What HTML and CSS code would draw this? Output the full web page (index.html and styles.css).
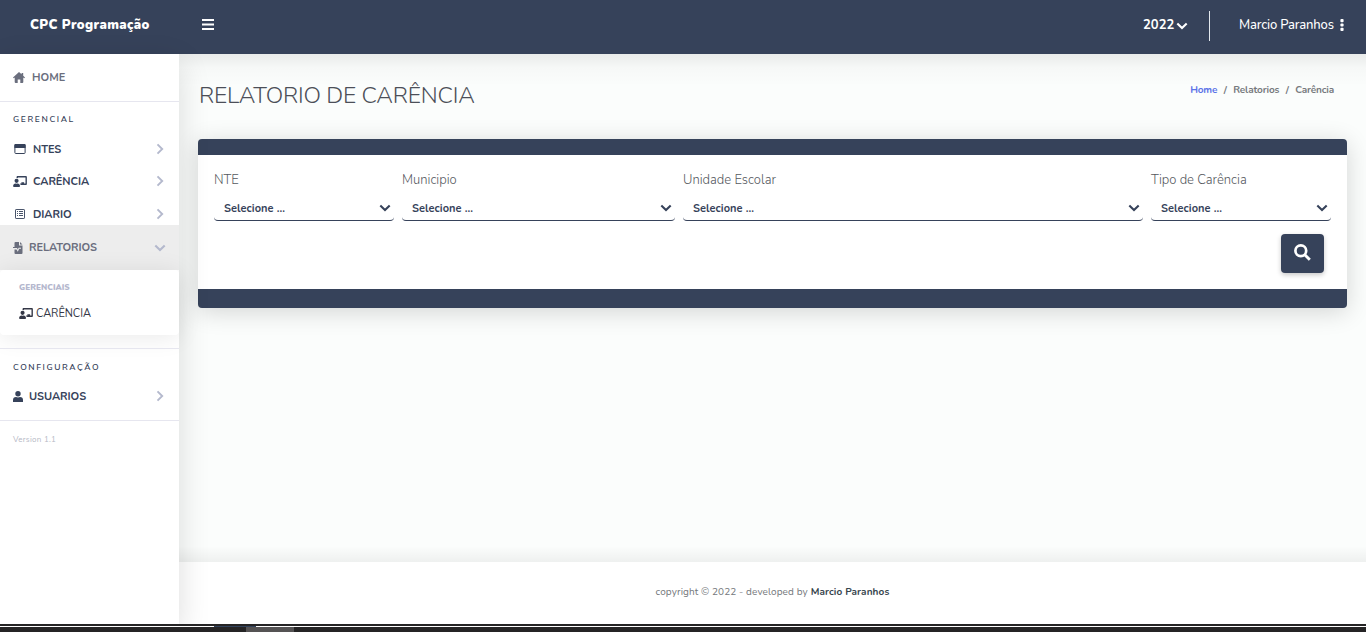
FILE: index.html
```html
<!DOCTYPE html>
<html lang="pt-BR">
<head>
<meta charset="utf-8">
<title>CPC Programação</title>
<link rel="stylesheet" href="styles.css">
</head>
<body>
<svg class="defs" aria-hidden="true">
  <symbol id="chevron" viewBox="0 0 8 12"><path d="M1.500 1.300 6.200 6l-4.700 4.700" fill="none" stroke="currentColor" stroke-width="1.900"/></symbol>
  <symbol id="down" viewBox="0 0 12 8"><path d="M1.300 1.500 6 6l4.700-4.500" fill="none" stroke="currentColor" stroke-width="2.100"/></symbol>
  <symbol id="teacher" viewBox="0 0 640 512"><path fill="currentColor" d="M208 352c-2 0-5 0-7 1a128 128 0 0 1-82 0c-2-1-5-1-7-1C50 352 0 402 0 464c0 26 22 48 48 48h224c26 0 48-22 48-48 0-62-50-112-112-112zm-48-32a96 96 0 1 0 0-192 96 96 0 0 0 0 192zM592 0H208c-26 0-48 22-48 49v47c23 0 45 7 64 18V64h352v288h-64v-64H384v64h-76c20 17 34 39 40 64h244c26 0 48-22 48-49V49c0-27-22-49-48-49z"/></symbol>
</svg>
<header class="topbar">
  <div class="brand">CPC Programação</div>
  <svg class="menu" viewBox="0 0 12 11"><path d="M0 1h12M0 5.500h12M0 10h12" stroke="#fff" stroke-width="1.800"/></svg>
  <div class="year">2022</div>
  <svg class="year-arrow"><use href="#down"/></svg>
  <div class="divider"></div>
  <div class="user">Marcio Paranhos</div>
  <svg class="dots" viewBox="0 0 4 12"><rect x=".4" width="3.200" height="3.200" rx="1" fill="#fff"/><rect x=".4" y="4.400" width="3.200" height="3.200" rx="1" fill="#fff"/><rect x=".4" y="8.800" width="3.200" height="3.200" rx="1" fill="#fff"/></svg>
</header>
<div class="shell">
  <nav class="sidebar">
    <a class="item home"><svg class="i-home" viewBox="0 0 12 11"><path d="M6 0 0 5.400l.7.800 1-.7V10q0 1 1 1h2V7.500h2.600V11h2q1 0 1-1V5.500l1 .7.700-.8-1.800-1.600V1H8.600v1.300z" fill="currentColor"/></svg><span>HOME</span></a>
    <div class="section">GERENCIAL</div>
    <a class="item ntes"><svg class="i-sq" viewBox="0 0 12 10"><rect x=".9" y=".5" width="10.200" height="9" rx=".8" fill="none" stroke="currentColor"/><path d="M1.400 0h9.200q1 0 1 1v3H.4V1q0-1 1-1z" fill="currentColor"/></svg><span>NTES</span><svg class="chev"><use href="#chevron"/></svg></a>
    <a class="item carencia"><svg class="i-teach"><use href="#teacher"/></svg><span>CARÊNCIA</span><svg class="chev"><use href="#chevron"/></svg></a>
    <a class="item diario"><svg class="i-sq" viewBox="0 0 12 10"><rect x="1.500" y=".5" width="9" height="9" rx=".6" fill="none" stroke="currentColor" stroke-width=".9"/><path d="M3 2.500h1M5 2.500h4M3 4.500h1M5 4.500h4M3 6.500h1M5 6.500h4" stroke="currentColor" stroke-width=".9"/></svg><span>DIARIO</span><svg class="chev"><use href="#chevron"/></svg></a>
    <a class="item reports"><svg class="i-file" viewBox="0 0 10 12"><path d="M1.500 1q0-1 1-1H6v3.500h3.500V11q0 1-1 1h-6q-1 0-1-1V7.500h2L4.800 9.700l1.400-2.900H8V5.800H5.600L4.800 7.500 4 6H0V5h1.500zM7 0l2.500 2.500H7z" fill="currentColor"/></svg><span>RELATORIOS</span><svg class="chev-down"><use href="#down"/></svg></a>
    <div class="submenu">
      <div class="subhead">GERENCIAIS</div>
      <a class="sublink"><svg class="i-teach"><use href="#teacher"/></svg><span>CARÊNCIA</span></a>
    </div>
    <div class="section config">CONFIGURAÇÃO</div>
    <a class="item users"><svg class="i-user" viewBox="0 0 10 11"><circle cx="5" cy="2.700" r="2.700" fill="currentColor"/><path d="M0 11V9q0-3 3-3 2 .9 4 0 3 0 3 3v2z" fill="currentColor"/></svg><span>USUARIOS</span><svg class="chev"><use href="#chevron"/></svg></a>
    <div class="version">Version 1.1</div>
  </nav>
  <div class="main">
    <main class="content">
      <div class="heading">
        <h1>RELATORIO DE CARÊNCIA</h1>
        <div class="crumbs"><a>Home</a><i>/</i><span>Relatorios</span><i>/</i><span>Carência</span></div>
      </div>
      <section class="card">
        <div class="fields">
          <div class="field"><label>NTE</label><div class="select"><span>Selecione ...</span><svg><use href="#down"/></svg></div></div>
          <div class="field"><label>Municipio</label><div class="select"><span>Selecione ...</span><svg><use href="#down"/></svg></div></div>
          <div class="field"><label>Unidade Escolar</label><div class="select"><span>Selecione ...</span><svg><use href="#down"/></svg></div></div>
          <div class="field"><label>Tipo de Carência</label><div class="select"><span>Selecione ...</span><svg><use href="#down"/></svg></div></div>
        </div>
        <button class="search" aria-label="Buscar"><svg viewBox="0 0 17 17"><circle cx="6.800" cy="6.800" r="5.400" fill="none" stroke="#fff" stroke-width="2.700"/><path d="m10.800 10.800 5 5" stroke="#fff" stroke-width="2.900"/></svg></button>
      </section>
    </main>
    <footer class="footer"><span>copyright © 2022 - developed by</span><b>Marcio Paranhos</b></footer>
  </div>
</div>
<div class="taskbar"><div class="edge"></div><div class="line"><i></i></div><div class="base"><i></i></div></div>
</body>
</html>
```
FILE: styles.css
```css
* { box-sizing: border-box; }
body { margin: 0; width: 1366px; height: 632px; overflow: hidden; display: flex; flex-direction: column; font-family: Nunito, Lato, sans-serif; color: #36425a; background: #fff; }
svg { display: block; flex: none; }
span, label, h1, b, .brand, .user, .year { white-space: nowrap; }
.defs { display: none; }

.topbar { height: 54px; flex: none; background: #36425a; color: #fff; display: flex; align-items: center; padding: 0 22px 5px 30px; font-size: 13px; }
.brand { width: 172px; font-weight: 900; letter-spacing: .37px; }
.menu { width: 12px; height: 11px; margin-right: auto; }
.year { font-weight: 700; width: 33px; letter-spacing: .05px; }
.year-arrow { width: 12px; height: 8px; margin-top: 2px; }
.divider { width: 1px; height: 30px; margin: 3px 29px 0 21px; background: #e3e8ee; }
.user { width: 101px; font-weight: 500; letter-spacing: -.18px; padding-top: 1px; }
.dots { width: 4px; height: 12px; margin-top: 1px; }

.shell { flex: 1; min-height: 0; display: flex; }
.sidebar { width: 179px; flex: none; background: #fff; box-shadow: 0 10px 30px rgba(0,0,0,.14); z-index: 1; font-size: 11px; }
.item { display: flex; align-items: center; height: 32px; padding: 0 15px 0 13px; font-weight: 700; letter-spacing: -.06px; }
.item .chev, .chev-down { margin-left: auto; color: #b4b9cd; }
.chev { width: 8px; height: 12px; }
.chev-down { width: 12px; height: 8px; margin-right: -2px; }
.home { height: 48px; color: #6a6e7d; border-bottom: 1px solid #e6e6ef; letter-spacing: 0; }
.i-home { width: 12px; height: 11px; margin-right: 7px; }
.section { height: 31px; padding: 11px 13px 0; font-size: 8.5px; line-height: 13px; font-weight: 600; letter-spacing: 1.62px; }
.i-sq { width: 12px; height: 10px; margin: 0 7px 0 1px; }
.i-teach { width: 14px; height: 11px; margin-right: 6px; }
.diario { height: 28px; padding-top: 6px; }
.reports { height: 45px; background: #ededed; color: #6a6e7d; letter-spacing: -.08px; }
.i-file { width: 10px; height: 12px; margin-right: 6px; }
.submenu { height: 65px; margin-bottom: 13px; padding: 10px 19px; background: #fff; border-radius: 4px; box-shadow: 0 2px 24px rgba(0,0,0,.09); }
.subhead { height: 15px; font-size: 8.2px; line-height: 15px; font-weight: 900; color: #b5b8ce; letter-spacing: .02px; }
.sublink { display: flex; align-items: center; height: 37px; color: #343746; font-size: 11px; letter-spacing: -.06px; }
.sublink .i-teach { margin-right: 3px; }
.config { height: 32px; border-top: 1px solid #e6e6ef; padding-top: 12px; letter-spacing: 1.6px; }
.users { height: 41px; padding-bottom: 8px; border-bottom: 1px solid #e6e6ef; }
.i-user { width: 10px; height: 11px; margin-right: 6px; }
.version { padding: 13px; font-size: 8px; line-height: 12px; color: #b5b8c5; letter-spacing: .25px; }

.main { flex: 1; min-width: 0; display: flex; flex-direction: column; }
.content { flex: 1; padding: 27px 19px 0; background: linear-gradient(rgba(0,0,0,.07), rgba(0,0,0,.02) 14px, transparent 32px), linear-gradient(to top, rgba(0,0,0,.05), transparent 16px), #fbfdfc; }
.heading { height: 58px; display: flex; justify-content: space-between; align-items: flex-start; padding: 0 13px 0 1px; }
h1 { margin: 0; font-size: 23px; line-height: 29px; font-weight: 300; letter-spacing: -.2px; color: #4c4f58; }
.crumbs { display: flex; padding-top: 2px; font-size: 10px; line-height: 14px; font-weight: 700; letter-spacing: -.15px; color: #76797d; }
.crumbs a { color: #5b73e8; }
.crumbs i { width: 16px; text-align: center; font-style: normal; }
.card { height: 169px; background: #fff; border-top: 16px solid #36425a; border-bottom: 19px solid #36425a; border-radius: 4px; box-shadow: 0 4px 25px rgba(0,0,0,.16); padding: 16px; display: flex; flex-direction: column; }
.fields { display: grid; grid-template-columns: 180px 273px 460px 180px; gap: 8px; }
label { display: block; height: 25px; font-size: 13px; line-height: 18px; font-weight: 300; color: #55585e; }
.select { height: 25px; display: flex; align-items: center; justify-content: space-between; padding: 0 3px 0 10px; border-bottom: 1px solid #36425a; border-radius: 4px; font-size: 11px; font-weight: 700; letter-spacing: .06px; }
.select svg { width: 12px; height: 8px; }
.search { width: 43px; height: 39px; align-self: flex-end; flex: none; margin: 13px 7px 0 0; padding: 0 0 2px; border: 0; border-radius: 4px; background: #36425a; box-shadow: 0 2px 5px rgba(0,0,0,.22); display: grid; place-items: center; }
.search svg { width: 17px; height: 17px; }
.footer { height: 62px; flex: none; display: flex; justify-content: center; padding-top: 23px; background: #fff; font-size: 10px; line-height: 14px; letter-spacing: .1px; color: #74777b; }
.footer b { margin-left: 3px; color: #37454d; }

.taskbar { height: 8px; flex: none; background: #252425; position: relative; z-index: 2; }
.edge { height: 2px; }
.line { height: 1px; background: #fff; padding-left: 214px; }
.line i { display: block; width: 42px; height: 1px; background: #33435c; }
.base { height: 5px; padding-left: 246px; }
.base i { display: block; width: 48px; height: 5px; background: #555354; }
```
